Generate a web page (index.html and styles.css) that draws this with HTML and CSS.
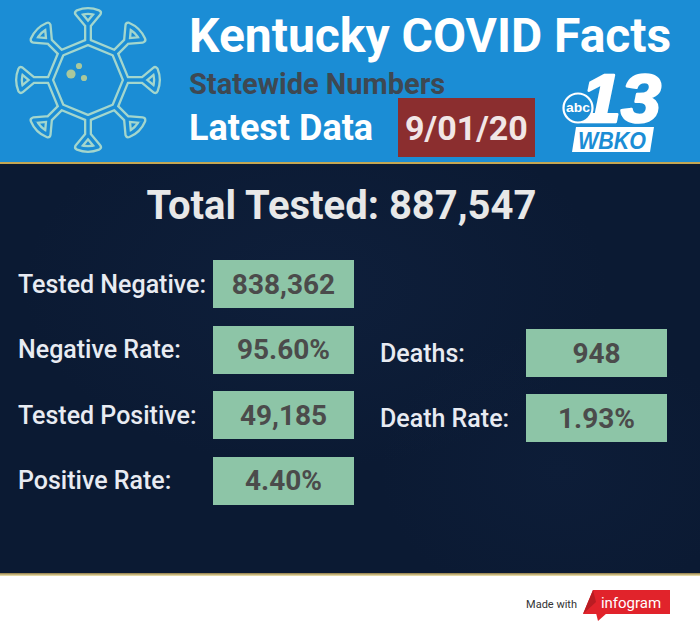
FILE: index.html
```html
<!DOCTYPE html>
<html lang="en">
<head>
<meta charset="utf-8">
<title>Kentucky COVID Facts</title>
<link rel="stylesheet" href="styles.css">
</head>
<body>
<div class="page">
  <header class="header">
    <div class="virus">
      <svg width="180" height="162" viewBox="0 0 180 162">
        <defs>
          <g id="spike">
            <path d="M0,-38 L0,-55 M0,-55 L-10,-67 Q0,-71 10,-67 Z"/>
          </g>
          <g id="shape">
            <polygon points="88,42 114.9,53.1 126,80 114.9,106.9 88,118 61.1,106.9 50,80 61.1,53.1"/>
            <g transform="translate(88,80)">
              <use href="#spike"/>
              <use href="#spike" transform="rotate(45)"/>
              <use href="#spike" transform="rotate(90)"/>
              <use href="#spike" transform="rotate(135)"/>
              <use href="#spike" transform="rotate(180)"/>
              <use href="#spike" transform="rotate(225)"/>
              <use href="#spike" transform="rotate(270)"/>
              <use href="#spike" transform="rotate(315)"/>
            </g>
          </g>
        </defs>
        <g fill="none" stroke="#a3d6cd" stroke-width="8" stroke-linejoin="round" stroke-linecap="round">
          <use href="#shape"/>
        </g>
        <g fill="none" stroke="#1b8dd5" stroke-width="3.4" stroke-linejoin="round" stroke-linecap="round">
          <use href="#shape"/>
        </g>
        <g fill="#a9c89c">
          <circle cx="71" cy="74" r="4.6"/>
          <circle cx="79" cy="66" r="3.1"/>
          <circle cx="84" cy="78" r="3.1"/>
        </g>
      </svg>
    </div>
    <div class="head-text">
      <h1 class="title">Kentucky COVID Facts</h1>
      <div class="head-row">
        <div class="head-left">
          <div class="subtitle">Statewide Numbers</div>
          <div class="latest">
            <span class="latest-label">Latest Data</span>
            <span class="date">9/01/20</span>
          </div>
        </div>
        <svg class="logo" width="115" height="100" viewBox="550 60 115 100">
          <text x="581" y="122" class="logo-num" textLength="80" lengthAdjust="spacingAndGlyphs">13</text>
          <polygon points="576,127 654,127 650,152 572,152" fill="#ffffff"/>
          <text x="612" y="149" class="logo-call" textLength="68" lengthAdjust="spacingAndGlyphs">WBKO</text>
          <circle cx="578" cy="108" r="14.5" fill="#1b8dd5" stroke="#ffffff" stroke-width="2.2"/>
          <text x="578" y="112" class="logo-abc" textLength="24" lengthAdjust="spacingAndGlyphs">abc</text>
        </svg>
      </div>
    </div>
  </header>

  <main class="main">
    <div class="total">Total Tested: 887,547</div>
    <div class="stats">
      <div class="col col-left">
        <div class="stat"><span class="label">Tested Negative:</span><span class="value">838,362</span></div>
        <div class="stat"><span class="label">Negative Rate:</span><span class="value">95.60%</span></div>
        <div class="stat"><span class="label">Tested Positive:</span><span class="value">49,185</span></div>
        <div class="stat"><span class="label">Positive Rate:</span><span class="value">4.40%</span></div>
      </div>
      <div class="col col-right">
        <div class="stat"><span class="label">Deaths:</span><span class="value">948</span></div>
        <div class="stat"><span class="label">Death Rate:</span><span class="value">1.93%</span></div>
      </div>
    </div>
  </main>
  <div class="rule"></div>

  <footer class="footer">
    <span class="made">Made with</span>
    <svg class="badge" width="88" height="32" viewBox="582 591 88 32">
      <polygon points="593,592 670,592 670,616 583,616" fill="#e1232b"/>
      <polygon points="583,616 593,592 596,604" fill="#b91c22"/>
      <polygon points="596,615 607,615 598,623" fill="#e1232b"/>
      <text x="631" y="610" class="badge-text">infogram</text>
    </svg>
  </footer>
</div>
</body>
</html>
```

FILE: styles.css
```css
* { box-sizing: border-box; }

html, body {
  margin: 0;
  padding: 0;
  background: #ffffff;
}

.page {
  width: 700px;
  height: 635px;
  overflow: hidden;
  font-family: Roboto, "Liberation Sans", sans-serif;
}

/* Header */
.header {
  display: flex;
  height: 164px;
  background: #1b8dd5;
  border-bottom: 2px solid #c4a653;
}

.virus {
  flex: none;
  width: 180px;
  height: 162px;
}

.virus svg { display: block; }

.head-text {
  margin-left: 9px;
  padding-top: 12px;
}

.title {
  margin: 0;
  font-size: 48px;
  line-height: 48px;
  font-weight: 700;
  color: #ffffff;
  white-space: nowrap;
}

.head-row {
  display: flex;
  margin-top: 10px;
}

.head-left {
  width: 346px;
}

.subtitle {
  font-size: 29px;
  line-height: 28px;
  font-weight: 700;
  color: #3e4852;
  white-space: nowrap;
}

.latest {
  display: flex;
  align-items: baseline;
  height: 59px;
}

.latest-label {
  font-size: 36px;
  font-weight: 700;
  color: #ffffff;
  white-space: nowrap;
}

.date {
  margin-left: auto;
  width: 137px;
  height: 59px;
  display: flex;
  align-items: center;
  justify-content: center;
  background: #8b2e2f;
  color: #f1e6e6;
  font-size: 34px;
  font-weight: 700;
}

.logo {
  display: block;
  flex: none;
  margin-left: 15px;
  margin-top: -10px;
}

.logo-num {
  font-family: "Liberation Sans", Arial, sans-serif;
  font-weight: 700;
  font-style: italic;
  font-size: 68px;
  fill: #ffffff;
  stroke: #ffffff;
  stroke-width: 2.5px;
  stroke-linejoin: round;
}

.logo-call {
  font-family: "Liberation Sans", Arial, sans-serif;
  font-weight: 700;
  font-style: italic;
  font-size: 24px;
  fill: #1b8dd5;
  text-anchor: middle;
}

.logo-abc {
  font-family: "Liberation Sans", Arial, sans-serif;
  font-weight: 700;
  font-size: 13px;
  fill: #ffffff;
  text-anchor: middle;
}

/* Main */
.main {
  height: 409px;
  background:
    radial-gradient(ellipse 420px 260px at 45% 30%, rgba(35, 60, 105, 0.14), rgba(35, 60, 105, 0) 70%),
    radial-gradient(ellipse 260px 200px at 80% 75%, rgba(30, 55, 100, 0.1), rgba(30, 55, 100, 0) 70%),
    #0b1a33;
  padding-top: 22px;
}

.total {
  text-align: center;
  padding-right: 17px;
  font-size: 40px;
  line-height: 40px;
  font-weight: 700;
  color: #e8e8e8;
}

.stats {
  display: flex;
  margin-top: 34px;
  padding-left: 18px;
}

.col {
  display: flex;
  flex-direction: column;
  gap: 17.67px;
}

.col-right {
  margin-left: 26px;
  margin-top: 69px;
  gap: 17px;
}

.stat {
  display: flex;
  align-items: center;
  height: 48px;
}

.col-left .label { width: 195px; }
.col-right .label { width: 146px; }

.label {
  font-size: 25px;
  font-weight: 500;
  color: #e8ebf2;
  white-space: nowrap;
}

.value {
  width: 141px;
  height: 48px;
  display: flex;
  align-items: center;
  justify-content: center;
  background: #8dc5a7;
  color: #4b4b4b;
  font-size: 28px;
  font-weight: 700;
}

.rule {
  height: 3px;
  background: linear-gradient(#8f7a44, #f3e8b4);
}

/* Footer */
.footer {
  height: 59px;
  display: flex;
  justify-content: flex-end;
  align-items: center;
  padding-right: 30px;
  padding-bottom: 2px;
}

.made {
  font-size: 11px;
  color: #333333;
  margin-right: 5px;
}

.badge { display: block; }

.badge-text {
  font-family: Roboto, "Liberation Sans", sans-serif;
  font-size: 15px;
  fill: #ffffff;
  text-anchor: middle;
}
```
